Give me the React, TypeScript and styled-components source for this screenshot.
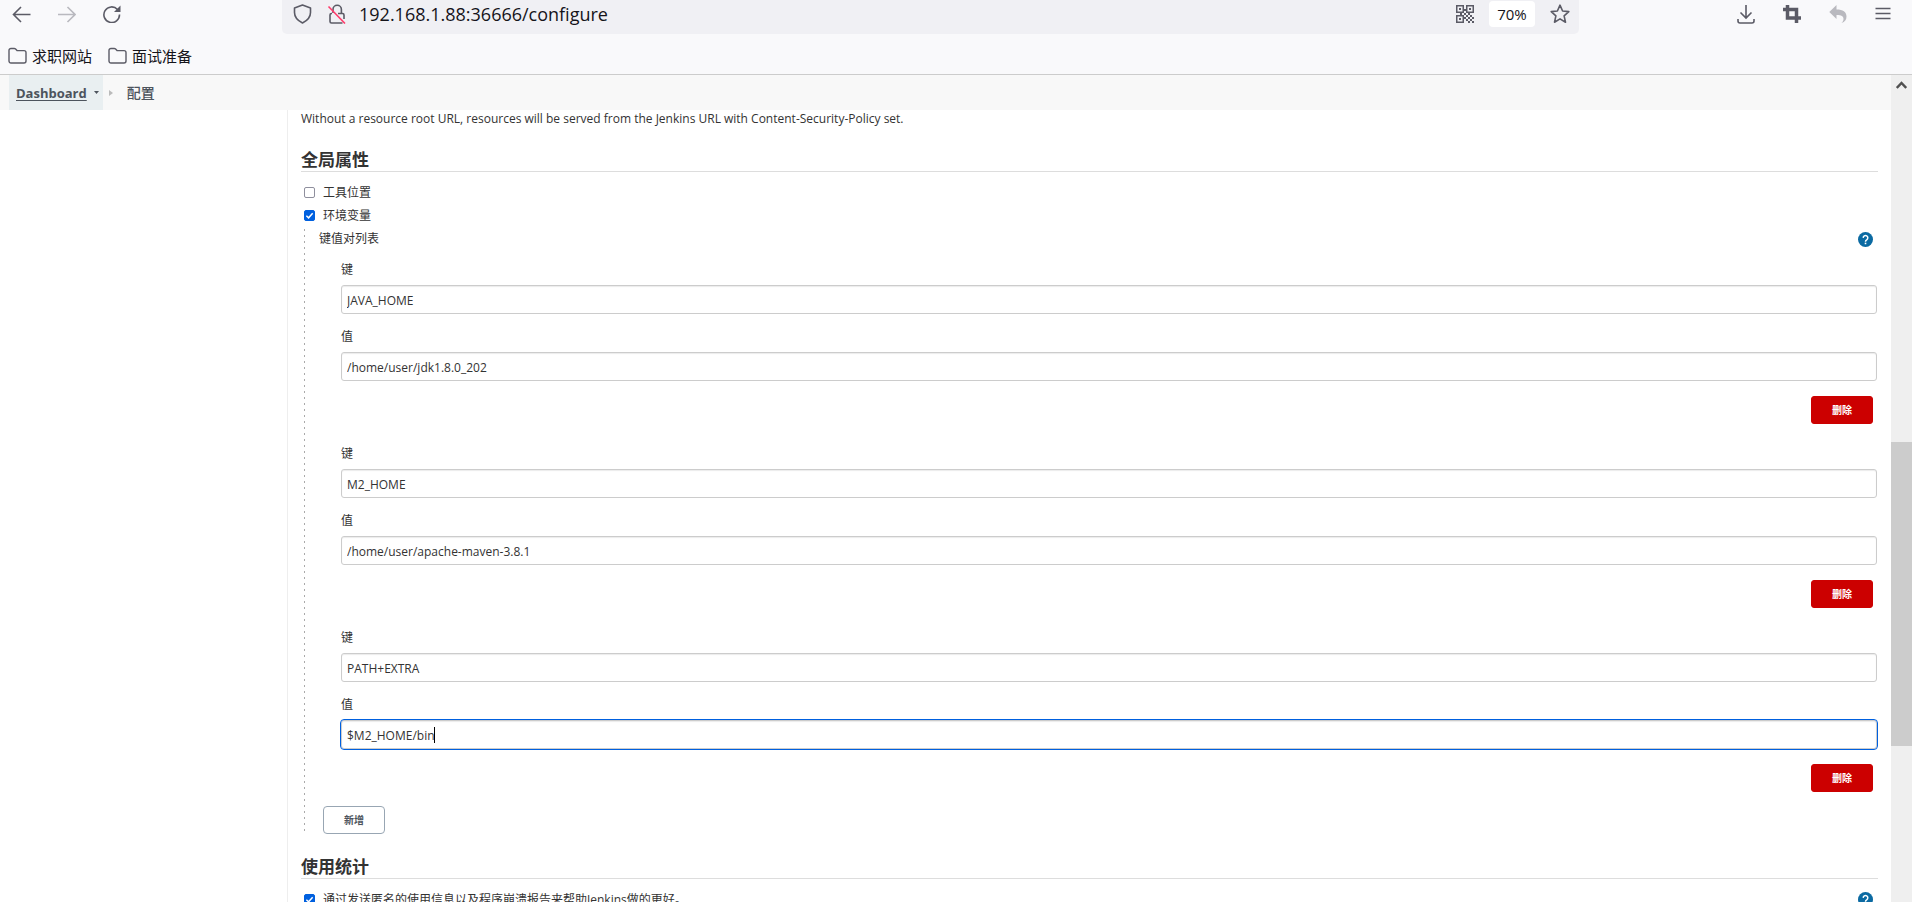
import React from "react";
import styled, { createGlobalStyle, css } from "styled-components";

const GlobalStyle = createGlobalStyle`
  *, *::before, *::after { box-sizing: border-box; }
  body {
    margin: 0;
    background: #fff;
    color: #333;
    font-family: "Open Sans", "Noto Sans CJK SC", sans-serif;
    font-size: 12px;
    line-height: 16px;
  }
`;

const Screen = styled.div`
  display: flex;
  flex-direction: column;
  height: 100vh;
  overflow: hidden;
`;

const Chrome = styled.header`
  flex: none;
  background: #f9f9fb;
  border-bottom: 1px solid #ccc;
`;

const Toolbar = styled.div`
  display: flex;
  align-items: flex-start;
  justify-content: space-between;
  height: 40px;
`;

const ToolGroup = styled.div<{ $gap: number }>`
  display: flex;
  align-items: center;
  gap: ${(p) => p.$gap}px;
  height: 28px;
  padding: 0 21px 0 12px;
`;

const IconButton = styled.button<{ $faded?: boolean }>`
  display: flex;
  flex: none;
  padding: 0;
  border: 0;
  background: none;
  color: ${(p) => (p.$faded ? "#b9b9bf" : "#5b5b66")};
`;

const AddressBar = styled.div`
  display: flex;
  flex: 0 1 1297px;
  align-items: center;
  gap: 15px;
  height: 34px;
  margin: 0 auto 0 140px;
  padding: 0 9px 6px 11px;
  border-radius: 0 0 5px 5px;
  background: #f0f0f4;
`;

const AddressInput = styled.input`
  flex: 1;
  min-width: 0;
  padding: 0;
  margin-left: -3px;
  border: 0;
  outline: 0;
  background: none;
  color: #15141a;
  font: 18px/24px "Open Sans", sans-serif;
`;

const ZoomBadge = styled.button`
  width: 46px;
  height: 26px;
  padding: 0;
  border: 0;
  border-radius: 4px;
  background: #fff;
  color: #15141a;
  font: 15px/20px "Open Sans", sans-serif;
`;

const Bookmarks = styled.nav`
  display: flex;
  gap: 16px;
  height: 34px;
  padding: 0 8px 2px;
  align-items: center;
`;

const Bookmark = styled.a`
  display: flex;
  align-items: center;
  gap: 5px;
  color: #15141a;
  font-size: 15px;
  line-height: 20px;
  text-decoration: none;
`;

const Viewport = styled.div`
  display: flex;
  flex: 1;
  min-height: 0;
`;

const Page = styled.div`
  display: flex;
  flex: 1;
  flex-direction: column;
  min-width: 0;
`;

const Breadcrumbs = styled.nav`
  display: flex;
  flex: none;
  align-items: center;
  height: 35px;
  padding-left: 9px;
  background: #f8f8f8;
  color: #4d545d;
`;

const Crumb = styled.a`
  display: flex;
  align-items: center;
  gap: 7px;
  height: 100%;
  padding: 0 4px 0 7px;
  background: #e9eff1;
  color: #4d545d;
  font-size: 13px;
  font-weight: 700;
  text-underline-offset: 2px;
`;

const CurrentCrumb = styled.span`
  margin-left: 14px;
  font-size: 14px;
  font-weight: 500;
`;

const CrumbArrow = styled.svg`
  margin-left: 6px;
`;

const Columns = styled.div`
  display: flex;
  flex: 1;
  min-height: 0;
`;

const SidePanel = styled.aside`
  flex: none;
  width: 287px;
`;

const Main = styled.main`
  flex: 1;
  min-width: 0;
  padding: 1px 13px 0 13px;
  border-left: 1px solid #eee;
  overflow: hidden;
`;

const Note = styled.p`
  margin: 0 0 23px;
`;

const SectionTitle = styled.h2`
  margin: 0 0 9px;
  padding-bottom: 1px;
  border-bottom: 1px solid #ddd;
  font-size: 17px;
  font-weight: 700;
  line-height: 20px;
`;

const CheckLine = styled.div`
  display: flex;
  align-items: center;
  height: 23px;
  padding: 0 5px 0 3px;
`;

const CheckLabel = styled.label`
  display: flex;
  flex: 1;
  align-items: center;
  gap: 8px;
`;

const CheckBox = styled.input`
  appearance: none;
  width: 11px;
  height: 11px;
  margin: 0;
  border: 1px solid #8f8f9d;
  border-radius: 2px;
  background: #fff;

  &:checked {
    border-color: #0060df;
    background: #0060df
      url("data:image/svg+xml,%3Csvg xmlns='http://www.w3.org/2000/svg' viewBox='0 0 10 10'%3E%3Cpath d='M1.5 5.2 4 7.6 8.5 2.5' fill='none' stroke='white' stroke-width='1.6'/%3E%3C/svg%3E");
  }
`;

const Nested = styled.div`
  margin: 2px 0 23px 3px;
  padding-left: 15px;
  background: repeating-linear-gradient(#aaa 0 2px, transparent 2px 6px) 0 0 / 1px 100% no-repeat;
`;

const ListHeader = styled.div`
  display: flex;
  align-items: center;
  justify-content: space-between;
  height: 20px;
  padding-right: 5px;
`;

const Pair = styled.fieldset`
  display: flex;
  flex-direction: column;
  gap: 15px;
  min-width: 0;
  margin: 0;
  padding: 13px 1px 9px 22px;
  border: 0;
`;

const Field = styled.label`
  display: block;
`;

const FieldName = styled.span`
  display: block;
  margin-bottom: 7px;
`;

const InputWrap = styled.span`
  display: block;
  position: relative;
`;

const focused = css`
  outline: 1px solid #0060df;
`;

const TextInput = styled.input<{ $active?: boolean }>`
  display: block;
  width: 100%;
  height: 29px;
  padding: 2px 5px 0;
  border: 1px solid #ccc;
  border-radius: 3px;
  box-shadow: inset 0 1px 1px rgba(0, 0, 0, 0.08);
  color: #333;
  font: inherit;
  ${(p) => p.$active && focused}
`;

const Caret = styled.span`
  position: absolute;
  top: 7px;
  left: 93px;
  width: 1px;
  height: 16px;
  background: #000;
`;

const PairActions = styled.div`
  display: flex;
  justify-content: flex-end;
  padding-right: 4px;
`;

const Button = styled.button<{ $danger?: boolean }>`
  width: 62px;
  height: 28px;
  padding: 0;
  border: 1px solid ${(p) => (p.$danger ? "#c00" : "#98a6b3")};
  border-radius: ${(p) => (p.$danger ? 3 : 4)}px;
  background: ${(p) => (p.$danger ? "#c00" : "#fff")};
  color: ${(p) => (p.$danger ? "#fff" : "#4d545d")};
  font-family: inherit;
  font-size: 10px;
  font-weight: 700;
  line-height: 16px;
`;

const AddRow = styled.div`
  display: flex;
  padding: 5px 0 0 4px;
`;

const ScrollTrack = styled.div`
  display: flex;
  flex: none;
  flex-direction: column;
  width: 21px;
  background: #efefef;
`;

const ScrollPart = styled.div<{ $share: number; $thumb?: boolean }>`
  flex: ${(p) => p.$share} 1 0;
  background: ${(p) => (p.$thumb ? "#ccc" : "none")};
`;

const ScrollUp = styled.svg`
  display: block;
  margin: 6px auto 0;
`;

const HelpButton = styled.button`
  display: flex;
  padding: 0;
  border: 0;
  background: none;
`;

const Help = () => (
  <HelpButton type="button" aria-label="帮助">
    <svg width="15" height="15" viewBox="0 0 24 24">
      <circle cx="12" cy="12" r="12" fill="#0b6aa2" />
      <path
        d="M8.3 9.4a3.7 3.7 0 1 1 5.6 3.2c-1.3.8-1.9 1.5-1.9 3"
        fill="none"
        stroke="#fff"
        strokeWidth="2.4"
      />
      <rect x="10.7" y="17" width="2.6" height="2.6" fill="#fff" />
    </svg>
  </HelpButton>
);

const Folder = () => (
  <svg width="19" height="18" viewBox="0 0 19 18" fill="none" stroke="#5b5b66" strokeWidth="1.4">
    <path d="M1 3.5a2 2 0 0 1 2-2h3.2c.6 0 1 .2 1.4.6L9 3.600h7a2 2 0 0 1 2 2v8.400a2 2 0 0 1-2 2H3a2 2 0 0 1-2-2z" />
  </svg>
);

const line = { fill: "none", stroke: "currentColor", strokeWidth: 1.6 } as const;

const pairs = [
  { key: "JAVA_HOME", value: "/home/user/jdk1.8.0_202" },
  { key: "M2_HOME", value: "/home/user/apache-maven-3.8.1" },
  { key: "PATH+EXTRA", value: "$M2_HOME/bin", editing: true },
];

export default function App() {
  return (
    <Screen>
      <GlobalStyle />
      <Chrome>
        <Toolbar>
          <ToolGroup $gap={26}>
            <IconButton aria-label="后退">
              <svg width="19" height="18" viewBox="0 0 19 18" {...line}>
                <path d="M18.500 9.500H1.500M9 2 1.500 9.500 9 17" />
              </svg>
            </IconButton>
            <IconButton aria-label="前进" $faded>
              <svg width="19" height="18" viewBox="0 0 19 18" {...line}>
                <path d="M1 9.500h17M10.500 2 18 9.500l-7.500 7.500" />
              </svg>
            </IconButton>
            <IconButton aria-label="刷新">
              <svg width="19" height="18" viewBox="0 0 19 18" {...line}>
                <path d="M15.500 4.500A7.800 7.800 0 1 0 17.500 9.500" />
                <path d="M18.500 .5v6.500H12z" fill="currentColor" stroke="none" />
              </svg>
            </IconButton>
          </ToolGroup>
          <AddressBar>
            <svg width="19" height="20" viewBox="0 0 19 20" fill="none" stroke="#5b5b66" strokeWidth="1.6">
              <path d="M9.500 1 17.500 4v4.500c0 4.500-3 8-8 10.500-5-2.500-8-6-8-10.500V4z" strokeLinejoin="round" />
            </svg>
            <svg width="20" height="20" viewBox="0 0 20 20" fill="none" stroke="#5b5b66" strokeWidth="1.600">
              <path d="M6 9V5.500a4.200 4.200 0 0 1 8.400 0V9" />
              <path d="M5 9.500h-.5a1.500 1.500 0 0 0-1.500 1.500v6.500A1.500 1.500 0 0 0 4.500 19h11M11 9.500h4.500A1.500 1.500 0 0 1 17 11v4" />
              <path d="M1.500 2.500 18 19.500" stroke="#ff3b6b" />
            </svg>
            <AddressInput aria-label="地址" defaultValue="192.168.1.88:36666/configure" />
            <IconButton aria-label="二维码">
              <svg width="18" height="18" viewBox="0 0 18 18" fill="currentColor">
                <path
                  fillRule="evenodd"
                  d="M0 0h8v8H0zM1.500 1.500v5h5v-5zM10 0h8v8h-8zM11.500 1.500v5h5v-5zM0 10h8v8H0zM1.500 11.500v5h5v-5z"
                />
                <path d="M3 3h2v2H3zM13 3h2v2h-2zM3 13h2v2H3zM8 4h2v2H8zM4 8h2v2H4zM8 8h2v2H8zM12 8h2v2h-2zM10 10h2v2h-2zM14 10h2v2h-2zM12 12h2v2h-2zM16 12h2v2h-2zM10 14h2v2h-2zM14 14h2v2h-2zM12 16h2v2h-2zM16 16h2v2h-2zM8 12h2v2H8z" />
              </svg>
            </IconButton>
            <ZoomBadge>70%</ZoomBadge>
            <IconButton aria-label="收藏">
              <svg width="20" height="20" viewBox="0 0 20 20" {...line} strokeLinejoin="round">
                <path d="M10 1.200 12.600 7l6.200.600-4.700 4.200 1.400 6.400L10 14.900l-5.500 3.300 1.400-6.400L1.200 7.600 7.400 7z" />
              </svg>
            </IconButton>
          </AddressBar>
          <ToolGroup $gap={28}>
            <IconButton aria-label="下载">
              <svg width="18" height="19" viewBox="0 0 18 19" {...line}>
                <path d="M9 0v13M3.500 7.500 9 13l5.500-5.500M1 14v2a2 2 0 0 0 2 2h12a2 2 0 0 0 2-2v-2" />
              </svg>
            </IconButton>
            <IconButton aria-label="截图">
              <svg width="18" height="18" viewBox="0 0 18 18" fill="none" stroke="currentColor" strokeWidth="3.500">
                <path d="M4.500 0v13H18M0 4.500h13.500V18" />
              </svg>
            </IconButton>
            <IconButton aria-label="撤销" $faded>
              <svg width="18" height="18" viewBox="0 0 18 18" fill="currentColor">
                <path d="M7.500 0v4.500c6.500 0 10 2.500 10 7 0 3-1.500 5.500-5 6.500 1.500-1.500 2-2.500 2-4 0-2.800-2-4-7-4v4L.3 7z" />
              </svg>
            </IconButton>
            <IconButton aria-label="菜单">
              <svg width="16" height="18" viewBox="0 0 16 18" {...line}>
                <path d="M.5 3.500h15M.5 8.500h15M.5 13.500h15" />
              </svg>
            </IconButton>
          </ToolGroup>
        </Toolbar>
        <Bookmarks>
          <Bookmark href="#"><Folder />求职网站</Bookmark>
          <Bookmark href="#"><Folder />面试准备</Bookmark>
        </Bookmarks>
      </Chrome>
      <Viewport>
        <Page>
          <Breadcrumbs>
            <Crumb href="#">
              Dashboard
              <svg width="5" height="3" viewBox="0 0 5 3"><path d="M0 0h5L2.500 3z" fill="#4d545d" /></svg>
            </Crumb>
            <CrumbArrow width="4" height="6" viewBox="0 0 4 6"><path d="M0 0v6l4-3z" fill="#bbb" /></CrumbArrow>
            <CurrentCrumb>配置</CurrentCrumb>
          </Breadcrumbs>
          <Columns>
            <SidePanel />
            <Main>
              <Note>
                Without a resource root URL, resources will be served from the Jenkins URL with
                Content-Security-Policy set.
              </Note>
              <SectionTitle>全局属性</SectionTitle>
              <CheckLine>
                <CheckLabel><CheckBox type="checkbox" />工具位置</CheckLabel>
              </CheckLine>
              <CheckLine>
                <CheckLabel><CheckBox type="checkbox" defaultChecked />环境变量</CheckLabel>
              </CheckLine>
              <Nested>
                <ListHeader>键值对列表<Help /></ListHeader>
                {pairs.map((p) => (
                  <Pair key={p.key}>
                    <Field>
                      <FieldName>键</FieldName>
                      <TextInput defaultValue={p.key} />
                    </Field>
                    <Field>
                      <FieldName>值</FieldName>
                      <InputWrap>
                        <TextInput defaultValue={p.value} $active={p.editing} />
                        {p.editing && <Caret />}
                      </InputWrap>
                    </Field>
                    <PairActions><Button type="button" $danger>删除</Button></PairActions>
                  </Pair>
                ))}
                <AddRow><Button type="button">新增</Button></AddRow>
              </Nested>
              <SectionTitle>使用统计</SectionTitle>
              <CheckLine>
                <CheckLabel>
                  <CheckBox type="checkbox" defaultChecked />
                  通过发送匿名的使用信息以及程序崩溃报告来帮助Jenkins做的更好。
                </CheckLabel>
                <Help />
              </CheckLine>
            </Main>
          </Columns>
        </Page>
        <ScrollTrack>
          <ScrollPart $share={367}>
            <ScrollUp width="11" height="8" viewBox="0 0 11 8" fill="none" stroke="#505050" strokeWidth="2.400">
              <path d="M.800 7 5.500 2l4.700 5" />
            </ScrollUp>
          </ScrollPart>
          <ScrollPart $share={304} $thumb />
          <ScrollPart $share={156} />
        </ScrollTrack>
      </Viewport>
    </Screen>
  );
}
